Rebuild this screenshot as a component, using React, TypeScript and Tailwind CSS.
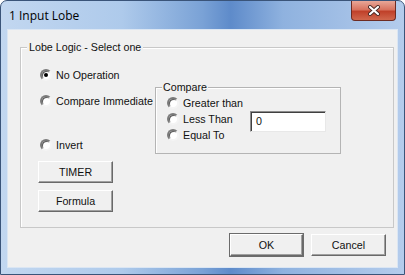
import React from "react";

function Radio({ checked = false }: { checked?: boolean }) {
  return (
    <span className="relative inline-block h-[12px] w-[12px] shrink-0 rounded-full border-2 border-t-[#7a7a7a] border-l-[#7a7a7a] border-r-[#f4f4f4] border-b-[#f4f4f4] bg-white shadow-[inset_1px_1px_0_#5a5a5a]">
      {checked ? (
        <span className="absolute left-[2px] top-[2px] h-[4px] w-[4px] rounded-full bg-black" />
      ) : null}
    </span>
  );
}

function RadioRow({
  label,
  checked,
  className = "",
}: {
  label: string;
  checked?: boolean;
  className?: string;
}) {
  return (
    <div className={`flex h-[16px] items-center gap-[4px] ${className}`}>
      <Radio checked={checked} />
      <span className="leading-none">{label}</span>
    </div>
  );
}

function Button({
  label,
  isDefault = false,
  className = "",
}: {
  label: string;
  isDefault?: boolean;
  className?: string;
}) {
  return (
    <button
      type="button"
      className={`flex items-center justify-center border border-t-white border-l-white border-r-[#696969] border-b-[#696969] bg-[#f0f0f0] leading-none text-[#111] shadow-[inset_-1px_-1px_0_#a0a0a0] ${
        isDefault ? "outline outline-1 outline-[#6b6b6b]" : ""
      } ${className}`}
    >
      {label}
    </button>
  );
}

export default function App() {
  return (
    <div
      className="flex h-[275px] w-[405px] flex-col overflow-hidden rounded-t-[7px] border border-[#3a5479] bg-[linear-gradient(to_right,#c2d7f0_0%,#aecaeb_30%,#7aa2d6_50%,#5e8bca_57%,#8fb2df_70%,#b4ccec_100%)] text-[10.7px] text-[#111]"
      style={{ fontFamily: '"Liberation Sans", Arial, sans-serif' }}
    >
      {/* title bar */}
      <div className="flex h-[29px] shrink-0 items-start">
        <span
          className="ml-[8px] mt-[8px] text-[12px] leading-[14px] text-black"
          style={{ fontFamily: '"Open Sans", "Liberation Sans", sans-serif' }}
        >
          1 Input Lobe
        </span>
        <div className="ml-auto mr-[8px] flex h-[20px] w-[45px] items-center justify-center rounded-b-[4px] border border-t-0 border-[#6d2b22] bg-[linear-gradient(to_bottom,#e8a798_0%,#d8735f_45%,#c0412a_55%,#d0674d_100%)]">
          <svg width="14" height="11" viewBox="0 0 14 11">
            <path d="M3 2 L11 9 M11 2 L3 9" stroke="#4a2a26" strokeWidth="4" strokeLinecap="round" />
            <path d="M3 2 L11 9 M11 2 L3 9" stroke="#ffffff" strokeWidth="2.2" strokeLinecap="round" />
          </svg>
        </div>
      </div>

      {/* client area */}
      <div className="mx-[7px] flex h-[237px] shrink-0 flex-col bg-[#f0f0f0] shadow-[0_0_0_1px_#dbe6f3]">
        {/* Lobe Logic group */}
        <div className="relative ml-[12px] mt-[17px] flex h-[181px] w-[374px] border border-[#c8c8c8] shadow-[inset_1px_1px_0_#ffffff]">
          <span className="absolute left-[6px] top-[-8px] bg-[#f0f0f0] px-[2px] leading-[14px]">
            Lobe Logic - Select one
          </span>

          <div className="flex w-[134px] flex-col pl-[17px] pt-[19px]">
            <RadioRow label="No Operation" checked className="pl-[2px]" />
            <RadioRow label="Compare Immediate" className="mt-[10px] pl-[2px] whitespace-nowrap" />
            <RadioRow label="Invert" className="mt-[28px] pl-[2px]" />
            <Button label="TIMER" className="mt-[8px] h-[22px] w-[75px]" />
            <Button label="Formula" className="mt-[7px] h-[22px] w-[75px]" />
          </div>

          {/* Compare group */}
          <div className="relative mt-[39px] flex h-[67px] w-[186px] border border-[#b4b4b4] shadow-[inset_1px_1px_0_#ffffff]">
            <span className="absolute left-[6px] top-[-8px] bg-[#f0f0f0] px-[1px] leading-[14px]">
              Compare
            </span>
            <div className="flex w-[94px] flex-col pl-[11px] pt-[7px]">
              <RadioRow label="Greater than" className="whitespace-nowrap" />
              <RadioRow label="Less Than" />
              <RadioRow label="Equal To" />
            </div>
            <div className="mt-[23px] flex h-[21px] w-[76px] items-center border border-t-[#8c8c8c] border-l-[#8c8c8c] border-r-[#e8e8e8] border-b-[#e8e8e8] bg-white pl-[5px] shadow-[inset_1px_1px_0_#404040]">
              0
            </div>
          </div>
        </div>

        {/* OK / Cancel */}
        <div className="mr-[11px] mt-[6px] flex justify-end gap-[8px]">
          <Button label="OK" isDefault className="h-[22px] w-[73px]" />
          <Button label="Cancel" className="h-[22px] w-[75px]" />
        </div>
      </div>
    </div>
  );
}
